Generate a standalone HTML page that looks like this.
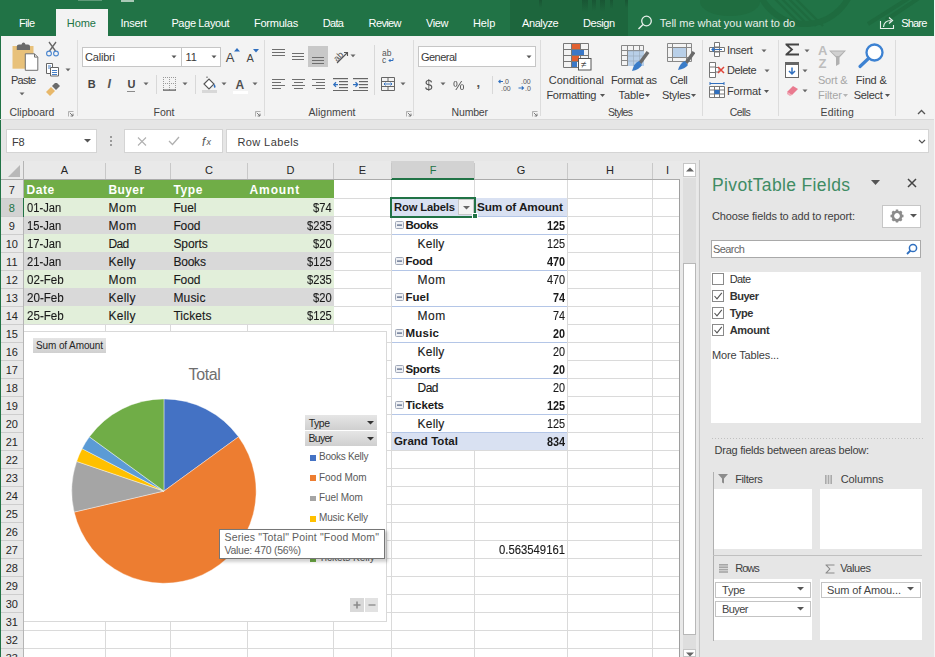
<!DOCTYPE html><html><head><meta charset="utf-8"><style>
html,body{margin:0;padding:0;}
body{width:935px;height:657px;overflow:hidden;position:relative;background:#e6e6e6;font-family:"Liberation Sans",sans-serif;}
div{box-sizing:border-box;}
</style></head><body>
<div style="position:absolute;left:0px;top:0px;width:935px;height:36px;background:#217346;"></div>
<div style="position:absolute;left:510px;top:0px;width:118px;height:36px;background:#1d663d;"></div>
<svg style="position:absolute;left:530px;top:0px;" width="100" height="14" viewBox="0 0 100 14"><defs><linearGradient id="fd" x1="0" y1="0" x2="0" y2="1"><stop offset="0" stop-color="#174f30" stop-opacity="0.7"/><stop offset="1" stop-color="#174f30" stop-opacity="0"/></linearGradient></defs><rect x="9" y="0" width="3" height="8" fill="url(#fd)"/><rect x="52" y="0" width="6" height="12" fill="url(#fd)"/><rect x="62" y="0" width="4" height="11" fill="url(#fd)"/><rect x="70" y="0" width="5" height="12" fill="url(#fd)"/><rect x="80" y="0" width="3" height="9" fill="url(#fd)"/><rect x="95" y="0" width="3" height="8" fill="url(#fd)"/></svg>
<svg style="position:absolute;left:628px;top:0px;" width="306" height="36" viewBox="0 0 306 36"><g fill="none" stroke="#1e6b3f"><ellipse cx="102" cy="2" rx="30" ry="14" fill="#1f6d40" stroke="none"/><path d="M146 -2 L174 26 M153 -2 L181 26 M160 -2 L188 26 M167 -2 L195 26" stroke-width="2.4"/><circle cx="177" cy="-25" r="49" stroke-width="6"/><path d="M281 -2 L240 24 M291 -2 L258 20" stroke-width="4"/></g></svg>
<div style="position:absolute;left:56px;top:9px;width:52px;height:27px;background:#f3f3f3;"></div>
<div style="position:absolute;left:78px;top:0px;width:24px;height:1px;background:#5e9a78;"></div>
<div style="position:absolute;left:121px;top:0px;width:13px;height:2px;background:#a9c9b6;"></div>
<div style="position:absolute;left:19.00px;top:17.69px;font-size:11px;line-height:11px;color:#ffffff;white-space:pre;letter-spacing:-0.570px;">File</div>
<div style="position:absolute;left:66.80px;top:17.69px;font-size:11px;line-height:11px;color:#217346;white-space:pre;letter-spacing:-0.057px;">Home</div>
<div style="position:absolute;left:120.50px;top:17.69px;font-size:11px;line-height:11px;color:#ffffff;white-space:pre;letter-spacing:-0.260px;">Insert</div>
<div style="position:absolute;left:171.40px;top:17.69px;font-size:11px;line-height:11px;color:#ffffff;white-space:pre;letter-spacing:-0.356px;">Page Layout</div>
<div style="position:absolute;left:254.00px;top:17.69px;font-size:11px;line-height:11px;color:#ffffff;white-space:pre;letter-spacing:-0.239px;">Formulas</div>
<div style="position:absolute;left:322.70px;top:17.69px;font-size:11px;line-height:11px;color:#ffffff;white-space:pre;letter-spacing:-0.655px;">Data</div>
<div style="position:absolute;left:368.60px;top:17.69px;font-size:11px;line-height:11px;color:#ffffff;white-space:pre;letter-spacing:-0.636px;">Review</div>
<div style="position:absolute;left:426.00px;top:17.69px;font-size:11px;line-height:11px;color:#ffffff;white-space:pre;letter-spacing:-0.417px;">View</div>
<div style="position:absolute;left:473.00px;top:17.69px;font-size:11px;line-height:11px;color:#ffffff;white-space:pre;letter-spacing:-0.102px;">Help</div>
<div style="position:absolute;left:522.00px;top:17.69px;font-size:11px;line-height:11px;color:#ffffff;white-space:pre;letter-spacing:-0.410px;">Analyze</div>
<div style="position:absolute;left:583.00px;top:17.69px;font-size:11px;line-height:11px;color:#ffffff;white-space:pre;letter-spacing:-0.413px;">Design</div>
<svg style="position:absolute;left:637px;top:15px;" width="16" height="15" viewBox="0 0 16 15"><circle cx="9.5" cy="6" r="4.8" fill="none" stroke="#e8f0eb" stroke-width="1.3"/><path d="M6 9.5 L1.5 14" stroke="#e8f0eb" stroke-width="1.5"/></svg>
<div style="position:absolute;left:659.80px;top:17.69px;font-size:11px;line-height:11px;color:#e6efe9;white-space:pre;letter-spacing:-0.013px;">Tell me what you want to do</div>
<svg style="position:absolute;left:879px;top:16px;" width="17" height="14" viewBox="0 0 17 14"><path d="M1.5 5 V12.5 H14.5 V9" fill="none" stroke="#e8f0eb" stroke-width="1.1"/><path d="M4.5 11 C5 6 8 4.5 12 4.5 M10 1.5 L13.5 4.5 L10 7.5" fill="none" stroke="#e8f0eb" stroke-width="1.2"/></svg>
<div style="position:absolute;left:901.30px;top:17.69px;font-size:11px;line-height:11px;color:#ffffff;white-space:pre;letter-spacing:-0.843px;">Share</div>
<div style="position:absolute;left:934px;top:0px;width:1px;height:657px;background:#f3f3f3;"></div>
<div style="position:absolute;left:0px;top:36px;width:934px;height:84px;background:#f3f3f3;"></div>
<div style="position:absolute;left:0px;top:36px;width:1px;height:621px;background:#217346;"></div>
<div style="position:absolute;left:0px;top:119px;width:934px;height:1px;background:#d9d9d9;"></div>
<div style="position:absolute;left:77px;top:40px;width:1px;height:76px;background:#dcdcdc;"></div>
<div style="position:absolute;left:264px;top:40px;width:1px;height:76px;background:#dcdcdc;"></div>
<div style="position:absolute;left:413px;top:40px;width:1px;height:76px;background:#dcdcdc;"></div>
<div style="position:absolute;left:540px;top:40px;width:1px;height:76px;background:#dcdcdc;"></div>
<div style="position:absolute;left:702px;top:40px;width:1px;height:76px;background:#dcdcdc;"></div>
<div style="position:absolute;left:778px;top:40px;width:1px;height:76px;background:#dcdcdc;"></div>
<div style="position:absolute;left:895px;top:40px;width:1px;height:76px;background:#dcdcdc;"></div>
<div style="position:absolute;left:9.40px;top:107.41px;font-size:10.5px;line-height:10.5px;color:#444444;white-space:pre;letter-spacing:0.008px;">Clipboard</div>
<div style="position:absolute;left:153.50px;top:107.41px;font-size:10.5px;line-height:10.5px;color:#444444;white-space:pre;">Font</div>
<div style="position:absolute;left:308.50px;top:107.41px;font-size:10.5px;line-height:10.5px;color:#444444;white-space:pre;letter-spacing:0.041px;">Alignment</div>
<div style="position:absolute;left:451.60px;top:107.41px;font-size:10.5px;line-height:10.5px;color:#444444;white-space:pre;letter-spacing:-0.186px;">Number</div>
<div style="position:absolute;left:608.00px;top:107.41px;font-size:10.5px;line-height:10.5px;color:#444444;white-space:pre;letter-spacing:-0.723px;">Styles</div>
<div style="position:absolute;left:729.70px;top:107.41px;font-size:10.5px;line-height:10.5px;color:#444444;white-space:pre;letter-spacing:-0.591px;">Cells</div>
<div style="position:absolute;left:820.60px;top:107.41px;font-size:10.5px;line-height:10.5px;color:#444444;white-space:pre;letter-spacing:0.178px;">Editing</div>
<svg style="position:absolute;left:68px;top:111px;" width="6" height="6" viewBox="0 0 6 6"><path d="M0.5 5.5 V0.5 H5.5" fill="none" stroke="#a0a0a0" stroke-width="0.8"/><path d="M1.8 1.8 L5 5 M5 2.6 V5 H2.6" fill="none" stroke="#707070" stroke-width="0.9"/></svg>
<svg style="position:absolute;left:255px;top:111px;" width="6" height="6" viewBox="0 0 6 6"><path d="M0.5 5.5 V0.5 H5.5" fill="none" stroke="#a0a0a0" stroke-width="0.8"/><path d="M1.8 1.8 L5 5 M5 2.6 V5 H2.6" fill="none" stroke="#707070" stroke-width="0.9"/></svg>
<svg style="position:absolute;left:406px;top:111px;" width="6" height="6" viewBox="0 0 6 6"><path d="M0.5 5.5 V0.5 H5.5" fill="none" stroke="#a0a0a0" stroke-width="0.8"/><path d="M1.8 1.8 L5 5 M5 2.6 V5 H2.6" fill="none" stroke="#707070" stroke-width="0.9"/></svg>
<svg style="position:absolute;left:532px;top:111px;" width="6" height="6" viewBox="0 0 6 6"><path d="M0.5 5.5 V0.5 H5.5" fill="none" stroke="#a0a0a0" stroke-width="0.8"/><path d="M1.8 1.8 L5 5 M5 2.6 V5 H2.6" fill="none" stroke="#707070" stroke-width="0.9"/></svg>
<svg style="position:absolute;left:11px;top:42px;" width="29" height="30" viewBox="0 0 29 30"><rect x="1.5" y="4" width="21" height="22.7" fill="#e8c17a"/><path d="M5.8 4.5 Q5.8 2.5 8 2.5 H10.5 Q11 0.5 12.5 0.5 Q14 0.5 14.5 2.5 H17 Q19 2.5 19 4.5 V8 H5.8 Z" fill="#6a6a6a"/><path d="M14.3 11.8 H23.5 L26.8 15.1 V28.3 H14.3 Z" fill="#fff" stroke="#707070" stroke-width="1"/><path d="M23.5 11.8 V15.1 H26.8" fill="none" stroke="#707070" stroke-width="1"/></svg>
<div style="position:absolute;left:11.00px;top:74.69px;font-size:11px;line-height:11px;color:#3a3a3a;white-space:pre;letter-spacing:-0.776px;">Paste</div>
<svg style="position:absolute;left:19px;top:92px;" width="6" height="4" viewBox="0 0 6 4"><path d="M0.5 0.5 H5.5 L3 3.2 Z" fill="#666"/></svg>
<svg style="position:absolute;left:45px;top:41px;" width="15" height="16" viewBox="0 0 15 16"><path d="M4 1 L10.5 10 M11 1 L4.5 10" stroke="#666" stroke-width="1.3"/><circle cx="4" cy="12.5" r="2.4" fill="none" stroke="#4a86d0" stroke-width="1.1"/><circle cx="11" cy="12.5" r="2.4" fill="none" stroke="#4a86d0" stroke-width="1.1"/></svg>
<svg style="position:absolute;left:45px;top:62px;" width="15" height="15" viewBox="0 0 15 15"><path d="M1.5 1.5 H7.5 V11.5 H1.5 Z" fill="#fff" stroke="#666" stroke-width="1"/><path d="M5.5 5.5 H13.5 V14 H5.5 Z" fill="#fff" stroke="#666" stroke-width="1"/><path d="M3 4 H6 M3 6 H5 M7 8.5 H12 M7 10.5 H12 M7 12.5 H12" stroke="#2f6fbf" stroke-width="0.9"/></svg>
<svg style="position:absolute;left:65px;top:68px;" width="6" height="4" viewBox="0 0 6 4"><path d="M0.5 0.5 H5.5 L3 3.2 Z" fill="#666"/></svg>
<svg style="position:absolute;left:45px;top:83px;" width="16" height="14" viewBox="0 0 16 14"><path d="M1 9 L6 4 L10 8 L5 13 Z" fill="#e8b86a"/><path d="M7 3 L11 7 L15 3 L11 -1 Z" fill="#6a6a6a"/></svg>
<div style="position:absolute;left:82px;top:47px;width:100px;height:20px;background:#fff;border:1px solid #c6c6c6;"></div>
<div style="position:absolute;left:181px;top:47px;width:40px;height:20px;background:#fff;border:1px solid #c6c6c6;"></div>
<div style="position:absolute;left:85.00px;top:51.69px;font-size:11px;line-height:11px;color:#3a3a3a;white-space:pre;letter-spacing:-0.197px;">Calibri</div>
<div style="position:absolute;left:185.50px;top:51.69px;font-size:11px;line-height:11px;color:#3a3a3a;white-space:pre;">11</div>
<svg style="position:absolute;left:171px;top:55px;" width="6" height="4" viewBox="0 0 6 4"><path d="M0.5 0.5 H5.5 L3 3.2 Z" fill="#555"/></svg>
<svg style="position:absolute;left:211px;top:55px;" width="6" height="4" viewBox="0 0 6 4"><path d="M0.5 0.5 H5.5 L3 3.2 Z" fill="#555"/></svg>
<div style="position:absolute;left:225.80px;top:51.00px;font-size:13px;line-height:13px;color:#444;white-space:pre;">A</div>
<svg style="position:absolute;left:234px;top:48px;" width="6" height="4" viewBox="0 0 6 4"><path d="M0 3.5 L3 0 L6 3.5 Z" fill="#2f6fbf"/></svg>
<div style="position:absolute;left:246.50px;top:52.69px;font-size:11px;line-height:11px;color:#444;white-space:pre;">A</div>
<svg style="position:absolute;left:253px;top:49px;" width="6" height="4" viewBox="0 0 6 4"><path d="M0 0 H6 L3 3.5 Z" fill="#2f6fbf"/></svg>
<div style="position:absolute;left:87.80px;top:79.19px;font-size:11px;line-height:11px;color:#444;white-space:pre;font-weight:bold;">B</div>
<div style="position:absolute;left:107.50px;top:77.92px;font-size:12.5px;line-height:12.5px;color:#555;white-space:pre;font-weight:bold;font-style:italic;font-family:"Liberation Serif",serif;">I</div>
<div style="position:absolute;left:127.40px;top:78.69px;font-size:11px;line-height:11px;color:#444;white-space:pre;font-weight:bold;">U</div>
<div style="position:absolute;left:127px;top:90.5px;width:8px;height:1.0px;background:#8a8a8a;"></div>
<svg style="position:absolute;left:143px;top:82px;" width="6" height="4" viewBox="0 0 6 4"><path d="M0.5 0.5 H5.5 L3 3.2 Z" fill="#666"/></svg>
<div style="position:absolute;left:156px;top:75px;width:1px;height:19px;background:#d8d8d8;"></div>
<svg style="position:absolute;left:163px;top:77px;" width="13" height="14" viewBox="0 0 13 14"><rect x="0" y="0" width="1" height="1" fill="#9a9a9a"/><rect x="0" y="6" width="1" height="1" fill="#9a9a9a"/><rect x="0" y="0" width="1" height="1" fill="#9a9a9a"/><rect x="6" y="0" width="1" height="1" fill="#9a9a9a"/><rect x="12" y="0" width="1" height="1" fill="#9a9a9a"/><rect x="2" y="0" width="1" height="1" fill="#9a9a9a"/><rect x="2" y="6" width="1" height="1" fill="#9a9a9a"/><rect x="0" y="2" width="1" height="1" fill="#9a9a9a"/><rect x="6" y="2" width="1" height="1" fill="#9a9a9a"/><rect x="12" y="2" width="1" height="1" fill="#9a9a9a"/><rect x="4" y="0" width="1" height="1" fill="#9a9a9a"/><rect x="4" y="6" width="1" height="1" fill="#9a9a9a"/><rect x="0" y="4" width="1" height="1" fill="#9a9a9a"/><rect x="6" y="4" width="1" height="1" fill="#9a9a9a"/><rect x="12" y="4" width="1" height="1" fill="#9a9a9a"/><rect x="6" y="0" width="1" height="1" fill="#9a9a9a"/><rect x="6" y="6" width="1" height="1" fill="#9a9a9a"/><rect x="0" y="6" width="1" height="1" fill="#9a9a9a"/><rect x="6" y="6" width="1" height="1" fill="#9a9a9a"/><rect x="12" y="6" width="1" height="1" fill="#9a9a9a"/><rect x="8" y="0" width="1" height="1" fill="#9a9a9a"/><rect x="8" y="6" width="1" height="1" fill="#9a9a9a"/><rect x="0" y="8" width="1" height="1" fill="#9a9a9a"/><rect x="6" y="8" width="1" height="1" fill="#9a9a9a"/><rect x="12" y="8" width="1" height="1" fill="#9a9a9a"/><rect x="10" y="0" width="1" height="1" fill="#9a9a9a"/><rect x="10" y="6" width="1" height="1" fill="#9a9a9a"/><rect x="0" y="10" width="1" height="1" fill="#9a9a9a"/><rect x="6" y="10" width="1" height="1" fill="#9a9a9a"/><rect x="12" y="10" width="1" height="1" fill="#9a9a9a"/><rect x="12" y="0" width="1" height="1" fill="#9a9a9a"/><rect x="12" y="6" width="1" height="1" fill="#9a9a9a"/><rect x="0" y="12" width="1" height="1" fill="#9a9a9a"/><rect x="6" y="12" width="1" height="1" fill="#9a9a9a"/><rect x="12" y="12" width="1" height="1" fill="#9a9a9a"/><rect x="0" y="12.5" width="13" height="1.2" fill="#555"/></svg>
<svg style="position:absolute;left:182px;top:82px;" width="6" height="4" viewBox="0 0 6 4"><path d="M0.5 0.5 H5.5 L3 3.2 Z" fill="#666"/></svg>
<div style="position:absolute;left:195px;top:75px;width:1px;height:19px;background:#d8d8d8;"></div>
<svg style="position:absolute;left:201px;top:76px;" width="17" height="17" viewBox="0 0 17 17"><path d="M3 8 L8 3 L13 8 L8 13 Z" fill="#fff" stroke="#555" stroke-width="1.1"/><path d="M6 2 V0.5" stroke="#555"/><path d="M13 8 Q15.5 10 14 12 Q12 11 13 8Z" fill="#2f6fbf"/><rect x="1" y="14" width="15" height="3" fill="#d8d8d8"/></svg>
<svg style="position:absolute;left:221px;top:82px;" width="6" height="4" viewBox="0 0 6 4"><path d="M0.5 0.5 H5.5 L3 3.2 Z" fill="#666"/></svg>
<div style="position:absolute;left:235.40px;top:78.84px;font-size:12px;line-height:12px;color:#505050;white-space:pre;font-weight:bold;">A</div>
<div style="position:absolute;left:233px;top:91px;width:15px;height:3px;background:#fff;"></div>
<svg style="position:absolute;left:252px;top:82px;" width="6" height="4" viewBox="0 0 6 4"><path d="M0.5 0.5 H5.5 L3 3.2 Z" fill="#666"/></svg>
<svg style="position:absolute;left:272px;top:48.5px;" width="14" height="10" viewBox="0 0 14 10"><rect x="0" y="0" width="13" height="1" fill="#6e6e6e"/><rect x="0" y="3" width="13" height="1" fill="#6e6e6e"/><rect x="0" y="6" width="13" height="1" fill="#6e6e6e"/></svg>
<svg style="position:absolute;left:292px;top:52.5px;" width="14" height="10" viewBox="0 0 14 10"><rect x="0" y="0" width="12" height="1" fill="#6e6e6e"/><rect x="0" y="3" width="12" height="1" fill="#6e6e6e"/><rect x="0" y="6" width="12" height="1" fill="#6e6e6e"/></svg>
<div style="position:absolute;left:308px;top:46px;width:20px;height:21px;background:#c8c8c8;"></div>
<svg style="position:absolute;left:312px;top:57px;" width="14" height="10" viewBox="0 0 14 10"><rect x="0" y="0" width="12" height="1" fill="#6e6e6e"/><rect x="0" y="3" width="12" height="1" fill="#6e6e6e"/><rect x="0" y="6" width="12" height="1" fill="#6e6e6e"/></svg>
<svg style="position:absolute;left:333px;top:48px;" width="16" height="16" viewBox="0 0 16 16"><text x="0" y="11" font-size="9" fill="#555" transform="rotate(-45 6 8)" font-family="Liberation Sans">ab</text><path d="M4 15 L14 5 M11 4.5 H14.5 V8" fill="none" stroke="#555" stroke-width="1.1"/></svg>
<svg style="position:absolute;left:350px;top:54px;" width="6" height="4" viewBox="0 0 6 4"><path d="M0.5 0.5 H5.5 L3 3.2 Z" fill="#666"/></svg>
<div style="position:absolute;left:374px;top:45px;width:1px;height:50px;background:#d8d8d8;"></div>
<svg style="position:absolute;left:382px;top:49px;" width="14" height="15" viewBox="0 0 14 15"><text x="0" y="7" font-size="8.5" fill="#555" font-family="Liberation Sans">ab</text><text x="0" y="14" font-size="8.5" fill="#555" font-family="Liberation Sans">c</text><path d="M11 9 V11.5 H7 M8.5 10 L7 11.5 L8.5 13" fill="none" stroke="#2f6fbf" stroke-width="1"/></svg>
<svg style="position:absolute;left:272px;top:79px;" width="14" height="13" viewBox="0 0 14 13"><rect x="0" y="0" width="13" height="1" fill="#6e6e6e"/><rect x="0" y="3" width="9" height="1" fill="#6e6e6e"/><rect x="0" y="6" width="13" height="1" fill="#6e6e6e"/><rect x="0" y="9" width="9" height="1" fill="#6e6e6e"/></svg>
<svg style="position:absolute;left:292px;top:79px;" width="14" height="13" viewBox="0 0 14 13"><rect x="0" y="0" width="13" height="1" fill="#6e6e6e"/><rect x="2" y="3" width="9" height="1" fill="#6e6e6e"/><rect x="0" y="6" width="13" height="1" fill="#6e6e6e"/><rect x="2" y="9" width="9" height="1" fill="#6e6e6e"/></svg>
<svg style="position:absolute;left:312px;top:79px;" width="14" height="13" viewBox="0 0 14 13"><rect x="0" y="0" width="13" height="1" fill="#6e6e6e"/><rect x="4" y="3" width="9" height="1" fill="#6e6e6e"/><rect x="0" y="6" width="13" height="1" fill="#6e6e6e"/><rect x="4" y="9" width="9" height="1" fill="#6e6e6e"/></svg>
<svg style="position:absolute;left:333px;top:78px;" width="15" height="13" viewBox="0 0 15 13"><rect x="0" y="0" width="15" height="1.2" fill="#666"/><rect x="6" y="3" width="9" height="1.2" fill="#666"/><rect x="6" y="6" width="9" height="1.2" fill="#666"/><rect x="6" y="9" width="9" height="1.2" fill="#666"/><rect x="0" y="12" width="15" height="1.2" fill="#666"/><path d="M5 6.6 H0.8 M3 4.3 L0.8 6.6 L3 8.9" fill="none" stroke="#2f6fbf" stroke-width="1.3"/></svg>
<svg style="position:absolute;left:353px;top:78px;" width="15" height="13" viewBox="0 0 15 13"><rect x="0" y="0" width="15" height="1.2" fill="#666"/><rect x="6" y="3" width="9" height="1.2" fill="#666"/><rect x="6" y="6" width="9" height="1.2" fill="#666"/><rect x="6" y="9" width="9" height="1.2" fill="#666"/><rect x="0" y="12" width="15" height="1.2" fill="#666"/><path d="M0 6.6 H4.5 M2.5 4.3 L4.7 6.6 L2.5 8.9" fill="none" stroke="#2f6fbf" stroke-width="1.3"/></svg>
<svg style="position:absolute;left:381px;top:77px;" width="14" height="14" viewBox="0 0 14 14"><path d="M0.5 0.5 H13.5 V13.5 H0.5 Z M0.5 4.5 H13.5 M0.5 9.5 H13.5 M7 0.5 V4.5 M7 9.5 V13.5" fill="none" stroke="#666" stroke-width="1"/><path d="M3 7 H11 M4.5 5.5 L3 7 L4.5 8.5 M9.5 5.5 L11 7 L9.5 8.5" fill="none" stroke="#2f6fbf" stroke-width="0.9"/></svg>
<svg style="position:absolute;left:400px;top:82px;" width="6" height="4" viewBox="0 0 6 4"><path d="M0.5 0.5 H5.5 L3 3.2 Z" fill="#666"/></svg>
<div style="position:absolute;left:418px;top:46px;width:118px;height:21px;background:#fff;border:1px solid #c6c6c6;"></div>
<div style="position:absolute;left:421.00px;top:51.69px;font-size:11px;line-height:11px;color:#3a3a3a;white-space:pre;letter-spacing:-0.527px;">General</div>
<svg style="position:absolute;left:526px;top:55px;" width="6" height="4" viewBox="0 0 6 4"><path d="M0.5 0.5 H5.5 L3 3.2 Z" fill="#555"/></svg>
<div style="position:absolute;left:424.60px;top:77.95px;font-size:14px;line-height:14px;color:#555;white-space:pre;transform:scaleX(0.9653);transform-origin:0 0;">$</div>
<svg style="position:absolute;left:440px;top:82px;" width="6" height="4" viewBox="0 0 6 4"><path d="M0.5 0.5 H5.5 L3 3.2 Z" fill="#666"/></svg>
<div style="position:absolute;left:453.00px;top:79.00px;font-size:13px;line-height:13px;color:#555;white-space:pre;transform:scaleX(0.9939);transform-origin:0 0;">%</div>
<div style="position:absolute;left:476.50px;top:75.50px;font-size:13px;line-height:13px;color:#555;white-space:pre;font-weight:bold;">,</div>
<div style="position:absolute;left:492px;top:76px;width:1px;height:18px;background:#d8d8d8;"></div>
<svg style="position:absolute;left:498px;top:78px;" width="15" height="13" viewBox="0 0 15 13"><text x="5" y="6" font-size="7" fill="#555" font-family="Liberation Sans">.0</text><text x="3" y="12.5" font-size="7" fill="#555" font-family="Liberation Sans">.00</text><path d="M5 3.5 H0.8 M2.5 1.8 L0.8 3.5 L2.5 5.2" fill="none" stroke="#2f6fbf" stroke-width="1.1"/></svg>
<svg style="position:absolute;left:518px;top:78px;" width="15" height="13" viewBox="0 0 15 13"><text x="3" y="6" font-size="7" fill="#555" font-family="Liberation Sans">.00</text><text x="7" y="12.5" font-size="7" fill="#555" font-family="Liberation Sans">.0</text><path d="M0.5 10 H5.5 M3.8 8.3 L5.5 10 L3.8 11.7" fill="none" stroke="#2f6fbf" stroke-width="1.1"/></svg>
<svg style="position:absolute;left:563px;top:43px;" width="29" height="28" viewBox="0 0 29 28"><g fill="none" stroke="#777" stroke-width="1"><path d="M0.5 0.5 H25.5 V24.5 H0.5 Z M0.5 6.5 H25.5 M0.5 12.5 H25.5 M0.5 18.5 H25.5 M8.5 0.5 V24.5 M17.5 0.5 V24.5"/></g><rect x="9" y="1" width="8" height="5" fill="#e06030"/><rect x="9" y="7" width="12" height="5" fill="#3a78c8"/><rect x="9" y="13" width="7" height="5" fill="#e06030"/><rect x="9" y="19" width="5" height="5" fill="#3a78c8"/><rect x="15.5" y="15.5" width="12.5" height="11.5" fill="#fff" stroke="#555" stroke-width="1"/><text x="18" y="25" font-size="10" fill="#444" font-family="Liberation Sans">&#8800;</text></svg>
<div style="position:absolute;left:548.70px;top:75.19px;font-size:11px;line-height:11px;color:#3a3a3a;white-space:pre;letter-spacing:0.024px;">Conditional</div>
<div style="position:absolute;left:546.40px;top:89.69px;font-size:11px;line-height:11px;color:#3a3a3a;white-space:pre;letter-spacing:-0.287px;">Formatting</div>
<svg style="position:absolute;left:600px;top:94px;" width="5" height="3" viewBox="0 0 5 3"><path d="M0 0 H5 L2.5 3 Z" fill="#555"/></svg>
<svg style="position:absolute;left:621px;top:45px;" width="29" height="27" viewBox="0 0 29 27"><g fill="none" stroke="#888" stroke-width="1"><path d="M0.5 0.5 H22.5 V20.5 H0.5 Z M0.5 5.5 H22.5 M0.5 10.5 H22.5 M0.5 15.5 H22.5 M6.5 0.5 V20.5 M12.5 0.5 V20.5 M18.5 0.5 V20.5"/></g><rect x="7" y="6" width="16" height="15" fill="#b8cfe8"/><path d="M7 6 H23 M7 11 H23 M7 16 H23 M12.5 6 V21 M18.5 6 V21" stroke="#9ab" stroke-width="0.6"/><path d="M27 7 L19 18" stroke="#6a6a6a" stroke-width="3.5"/><path d="M18 16 Q13 18 11 26 Q18 25 21 20 Z" fill="#3a7cc8"/></svg>
<div style="position:absolute;left:611.00px;top:75.19px;font-size:11px;line-height:11px;color:#3a3a3a;white-space:pre;letter-spacing:-0.438px;">Format as</div>
<div style="position:absolute;left:618.50px;top:89.69px;font-size:11px;line-height:11px;color:#3a3a3a;white-space:pre;letter-spacing:-0.072px;">Table</div>
<svg style="position:absolute;left:645px;top:94px;" width="5" height="3" viewBox="0 0 5 3"><path d="M0 0 H5 L2.5 3 Z" fill="#555"/></svg>
<svg style="position:absolute;left:667px;top:43px;" width="28" height="28" viewBox="0 0 28 28"><g fill="none" stroke="#888" stroke-width="1"><path d="M0.5 0.5 H24.5 V18.5 H0.5 Z M0.5 4.5 H24.5 M0.5 14.5 H24.5 M5.5 0.5 V18.5 M19.5 0.5 V18.5"/></g><rect x="6" y="5" width="13" height="9" fill="#b8cfe8"/><path d="M27 9 L19 20" stroke="#6a6a6a" stroke-width="3.5"/><path d="M18 18 Q13 20 11 27 Q18 26 21 22 Z" fill="#3a7cc8"/></svg>
<div style="position:absolute;left:670.00px;top:75.19px;font-size:11px;line-height:11px;color:#3a3a3a;white-space:pre;letter-spacing:-0.458px;">Cell</div>
<div style="position:absolute;left:662.00px;top:89.69px;font-size:11px;line-height:11px;color:#3a3a3a;white-space:pre;letter-spacing:-0.295px;">Styles</div>
<svg style="position:absolute;left:691px;top:94px;" width="5" height="3" viewBox="0 0 5 3"><path d="M0 0 H5 L2.5 3 Z" fill="#555"/></svg>
<svg style="position:absolute;left:709px;top:42px;" width="16" height="15" viewBox="0 0 16 15"><path d="M5.5 0.5 H10.5 V14.5 H5.5 Z M5.5 5 H10.5 M5.5 10 H10.5 M0.5 5.5 V9.5 H15.5 V5.5 Z" fill="#fff" stroke="#777" stroke-width="1"/><path d="M13 7.5 H3 M5 5.5 L3 7.5 L5 9.5" fill="none" stroke="#2f6fbf" stroke-width="1.2"/></svg>
<div style="position:absolute;left:727.00px;top:44.69px;font-size:11px;line-height:11px;color:#3a3a3a;white-space:pre;letter-spacing:-0.340px;">Insert</div>
<svg style="position:absolute;left:761px;top:49px;" width="6" height="4" viewBox="0 0 6 4"><path d="M0.5 0.5 H5.5 L3 3.2 Z" fill="#666"/></svg>
<svg style="position:absolute;left:709px;top:62px;" width="16" height="16" viewBox="0 0 16 16"><path d="M0.5 0.5 H6.5 V15.5 H0.5 Z M0.5 5 H6.5 M0.5 10.5 H6.5 M6.5 5.5 H10 V10 H6.5" fill="#fff" stroke="#777" stroke-width="1"/><path d="M9 5 L15 11 M15 5 L9 11" stroke="#e0453a" stroke-width="1.5"/></svg>
<div style="position:absolute;left:727.00px;top:65.19px;font-size:11px;line-height:11px;color:#3a3a3a;white-space:pre;letter-spacing:-0.458px;">Delete</div>
<svg style="position:absolute;left:764px;top:69px;" width="6" height="4" viewBox="0 0 6 4"><path d="M0.5 0.5 H5.5 L3 3.2 Z" fill="#666"/></svg>
<svg style="position:absolute;left:709px;top:82px;" width="16" height="16" viewBox="0 0 16 16"><path d="M1 1.5 H15" stroke="#2f6fbf" stroke-width="1"/><path d="M1 0 V3 M15 0 V3" stroke="#2f6fbf" stroke-width="1"/><path d="M0.5 4.5 H15.5 V15.5 H0.5 Z M0.5 8 H15.5 M0.5 12 H15.5 M5.5 4.5 V15.5 M10.5 4.5 V15.5" fill="#fff" stroke="#777" stroke-width="1"/><rect x="5.5" y="8" width="5" height="4" fill="#2f6fbf"/></svg>
<div style="position:absolute;left:727.00px;top:85.69px;font-size:11px;line-height:11px;color:#3a3a3a;white-space:pre;letter-spacing:-0.163px;">Format</div>
<svg style="position:absolute;left:764px;top:90px;" width="5" height="3" viewBox="0 0 5 3"><path d="M0 0 H5 L2.5 3 Z" fill="#555"/></svg>
<svg style="position:absolute;left:785px;top:43px;" width="15" height="13" viewBox="0 0 15 13"><path d="M0.5 0.5 H14 V2.6 H3.8 L8.3 6.5 L3.8 10.4 H14 V12.5 H0.5 V11 L5.6 6.5 L0.5 2 Z" fill="#444"/></svg>
<svg style="position:absolute;left:804px;top:49px;" width="6" height="4" viewBox="0 0 6 4"><path d="M0.5 0.5 H5.5 L3 3.2 Z" fill="#666"/></svg>
<svg style="position:absolute;left:785px;top:62px;" width="14" height="16" viewBox="0 0 14 16"><rect x="0.5" y="0.5" width="13" height="15" fill="#fff" stroke="#666" stroke-width="1"/><rect x="0.5" y="0.5" width="13" height="2.5" fill="#666"/><path d="M7 5.5 V12 M4 9 L7 12 L10 9" fill="none" stroke="#2f6fbf" stroke-width="1.5"/></svg>
<svg style="position:absolute;left:802px;top:69px;" width="6" height="4" viewBox="0 0 6 4"><path d="M0.5 0.5 H5.5 L3 3.2 Z" fill="#666"/></svg>
<svg style="position:absolute;left:786px;top:85px;" width="13" height="11" viewBox="0 0 13 11"><path d="M1 7 L7 1 L12 4 L6 10 Z" fill="#e97a8f"/><path d="M1 7 L6 10 L4 11 L1 9 Z" fill="#f0a8b5"/></svg>
<svg style="position:absolute;left:802px;top:89px;" width="6" height="4" viewBox="0 0 6 4"><path d="M0.5 0.5 H5.5 L3 3.2 Z" fill="#666"/></svg>
<svg style="position:absolute;left:817px;top:43px;" width="30" height="26" viewBox="0 0 30 26"><text x="1" y="12" font-size="13" font-weight="bold" fill="#bdbdbd" font-family="Liberation Sans">A</text><text x="1.5" y="24.5" font-size="13" font-weight="bold" fill="#bdbdbd" font-family="Liberation Sans">Z</text><path d="M12 7.5 H29 L22.5 14.5 V21 L19 23 V14.5 Z" fill="#b0b0b0"/><path d="M14 8.5 H27 L22 13 H19 Z" fill="#d0d0d0"/></svg>
<div style="position:absolute;left:818.00px;top:75.19px;font-size:11px;line-height:11px;color:#a6a6a6;white-space:pre;letter-spacing:-0.216px;">Sort &amp;</div>
<div style="position:absolute;left:818.00px;top:89.69px;font-size:11px;line-height:11px;color:#a6a6a6;white-space:pre;letter-spacing:-0.084px;">Filter</div>
<svg style="position:absolute;left:843px;top:94px;" width="5" height="3" viewBox="0 0 5 3"><path d="M0 0 H5 L2.5 3 Z" fill="#b5b5b5"/></svg>
<svg style="position:absolute;left:857px;top:43px;" width="28" height="26" viewBox="0 0 28 26"><circle cx="17.5" cy="9.5" r="8" fill="#fff" stroke="#3d82d2" stroke-width="2.3"/><path d="M11.5 15.5 L3 23.5" stroke="#3d82d2" stroke-width="3.2" stroke-linecap="round"/></svg>
<div style="position:absolute;left:855.80px;top:75.19px;font-size:11px;line-height:11px;color:#3a3a3a;white-space:pre;letter-spacing:-0.158px;">Find &amp;</div>
<div style="position:absolute;left:853.80px;top:89.69px;font-size:11px;line-height:11px;color:#3a3a3a;white-space:pre;letter-spacing:-0.316px;">Select</div>
<svg style="position:absolute;left:885px;top:94px;" width="5" height="3" viewBox="0 0 5 3"><path d="M0 0 H5 L2.5 3 Z" fill="#555"/></svg>
<svg style="position:absolute;left:917px;top:109px;" width="9" height="6" viewBox="0 0 9 6"><path d="M1 5 L4.5 1.5 L8 5" fill="none" stroke="#555" stroke-width="1.3"/></svg>
<div style="position:absolute;left:6px;top:129px;width:91px;height:24px;background:#fff;border:1px solid #d4d4d4;"></div>
<div style="position:absolute;left:12.00px;top:136.69px;font-size:11px;line-height:11px;color:#3a3a3a;white-space:pre;letter-spacing:-0.315px;">F8</div>
<svg style="position:absolute;left:84px;top:139px;" width="7" height="4" viewBox="0 0 7 4"><path d="M0 0 H7 L3.5 3.5 Z" fill="#555"/></svg>
<div style="position:absolute;left:110px;top:136px;width:1.5px;height:1.5px;background:#9a9a9a;"></div>
<div style="position:absolute;left:110px;top:140px;width:1.5px;height:1.5px;background:#9a9a9a;"></div>
<div style="position:absolute;left:110px;top:144px;width:1.5px;height:1.5px;background:#9a9a9a;"></div>
<div style="position:absolute;left:124px;top:129px;width:99px;height:24px;background:#fff;border:1px solid #d4d4d4;"></div>
<svg style="position:absolute;left:137px;top:137px;" width="10" height="9" viewBox="0 0 10 9"><path d="M1 0.5 L9 8.5 M9 0.5 L1 8.5" stroke="#b0b0b0" stroke-width="1.1"/></svg>
<svg style="position:absolute;left:168px;top:136px;" width="12" height="10" viewBox="0 0 12 10"><path d="M1 5 L4.5 8.5 L11 1" fill="none" stroke="#b0b0b0" stroke-width="1.3"/></svg>
<div style="position:absolute;left:202.00px;top:135.84px;font-size:12px;line-height:12px;color:#555;white-space:pre;font-style:italic;font-family:"Liberation Serif",serif;">f</div>
<div style="position:absolute;left:206.41px;top:138.38px;font-size:9px;line-height:9px;color:#555;white-space:pre;font-style:italic;font-family:"Liberation Serif",serif;">x</div>
<div style="position:absolute;left:226px;top:129px;width:703px;height:24px;background:#fff;border:1px solid #d4d4d4;"></div>
<div style="position:absolute;left:237.40px;top:136.69px;font-size:11px;line-height:11px;color:#3a3a3a;white-space:pre;letter-spacing:0.414px;">Row Labels</div>
<svg style="position:absolute;left:918px;top:139px;" width="8" height="5" viewBox="0 0 8 5"><path d="M1 1 L4 4 L7 1" fill="none" stroke="#555" stroke-width="1.2"/></svg>
<div style="position:absolute;left:1px;top:161px;width:679px;height:19px;background:#e9e9e9;"></div>
<div style="position:absolute;left:1px;top:179px;width:679px;height:1px;background:#ababab;"></div>
<svg style="position:absolute;left:7px;top:165px;" width="14" height="13" viewBox="0 0 14 13"><path d="M13 0 V12 H1 Z" fill="#b8b8b8"/></svg>
<div style="position:absolute;left:391px;top:161px;width:83px;height:19px;background:#d2d2d2;"></div>
<div style="position:absolute;left:391px;top:178px;width:83px;height:2px;background:#217346;"></div>
<div style="position:absolute;left:23px;top:163px;width:1px;height:16px;background:#c8c8c8;"></div>
<div style="position:absolute;left:105px;top:163px;width:1px;height:16px;background:#c8c8c8;"></div>
<div style="position:absolute;left:170px;top:163px;width:1px;height:16px;background:#c8c8c8;"></div>
<div style="position:absolute;left:247px;top:163px;width:1px;height:16px;background:#c8c8c8;"></div>
<div style="position:absolute;left:333px;top:163px;width:1px;height:16px;background:#c8c8c8;"></div>
<div style="position:absolute;left:391px;top:163px;width:1px;height:16px;background:#c8c8c8;"></div>
<div style="position:absolute;left:474px;top:163px;width:1px;height:16px;background:#c8c8c8;"></div>
<div style="position:absolute;left:567px;top:163px;width:1px;height:16px;background:#c8c8c8;"></div>
<div style="position:absolute;left:652px;top:163px;width:1px;height:16px;background:#c8c8c8;"></div>
<div style="position:absolute;left:60.81px;top:164.89px;font-size:11px;line-height:11px;color:#262626;white-space:pre;">A</div>
<div style="position:absolute;left:134.34px;top:164.89px;font-size:11px;line-height:11px;color:#262626;white-space:pre;">B</div>
<div style="position:absolute;left:205.04px;top:164.89px;font-size:11px;line-height:11px;color:#262626;white-space:pre;">C</div>
<div style="position:absolute;left:286.54px;top:164.89px;font-size:11px;line-height:11px;color:#262626;white-space:pre;">D</div>
<div style="position:absolute;left:358.84px;top:164.89px;font-size:11px;line-height:11px;color:#262626;white-space:pre;">E</div>
<div style="position:absolute;left:429.64px;top:164.89px;font-size:11px;line-height:11px;color:#217346;white-space:pre;">F</div>
<div style="position:absolute;left:516.71px;top:164.89px;font-size:11px;line-height:11px;color:#262626;white-space:pre;">G</div>
<div style="position:absolute;left:606.04px;top:164.89px;font-size:11px;line-height:11px;color:#262626;white-space:pre;">H</div>
<div style="position:absolute;left:665.96px;top:164.89px;font-size:11px;line-height:11px;color:#262626;white-space:pre;">I</div>
<div style="position:absolute;left:24px;top:180px;width:656px;height:477px;background:#fff;"></div>
<div style="position:absolute;left:1px;top:180px;width:22px;height:477px;background:#e9e9e9;"></div>
<div style="position:absolute;left:1px;top:198px;width:22px;height:18px;background:#d2d2d2;"></div>
<div style="position:absolute;left:1px;top:198px;width:22px;height:1px;background:#cdcdcd;"></div>
<div style="position:absolute;left:8.75px;top:185.49px;font-size:11px;line-height:11px;color:#262626;white-space:pre;">7</div>
<div style="position:absolute;left:24px;top:198px;width:656px;height:1px;background:#dadada;"></div>
<div style="position:absolute;left:1px;top:216px;width:22px;height:1px;background:#cdcdcd;"></div>
<div style="position:absolute;left:8.75px;top:203.49px;font-size:11px;line-height:11px;color:#217346;white-space:pre;">8</div>
<div style="position:absolute;left:24px;top:216px;width:656px;height:1px;background:#dadada;"></div>
<div style="position:absolute;left:1px;top:234px;width:22px;height:1px;background:#cdcdcd;"></div>
<div style="position:absolute;left:8.75px;top:221.49px;font-size:11px;line-height:11px;color:#262626;white-space:pre;">9</div>
<div style="position:absolute;left:24px;top:234px;width:656px;height:1px;background:#dadada;"></div>
<div style="position:absolute;left:1px;top:252px;width:22px;height:1px;background:#cdcdcd;"></div>
<div style="position:absolute;left:5.70px;top:239.49px;font-size:11px;line-height:11px;color:#262626;white-space:pre;">10</div>
<div style="position:absolute;left:24px;top:252px;width:656px;height:1px;background:#dadada;"></div>
<div style="position:absolute;left:1px;top:270px;width:22px;height:1px;background:#cdcdcd;"></div>
<div style="position:absolute;left:6.08px;top:257.49px;font-size:11px;line-height:11px;color:#262626;white-space:pre;">11</div>
<div style="position:absolute;left:24px;top:270px;width:656px;height:1px;background:#dadada;"></div>
<div style="position:absolute;left:1px;top:288px;width:22px;height:1px;background:#cdcdcd;"></div>
<div style="position:absolute;left:5.70px;top:275.49px;font-size:11px;line-height:11px;color:#262626;white-space:pre;">12</div>
<div style="position:absolute;left:24px;top:288px;width:656px;height:1px;background:#dadada;"></div>
<div style="position:absolute;left:1px;top:306px;width:22px;height:1px;background:#cdcdcd;"></div>
<div style="position:absolute;left:5.70px;top:293.49px;font-size:11px;line-height:11px;color:#262626;white-space:pre;">13</div>
<div style="position:absolute;left:24px;top:306px;width:656px;height:1px;background:#dadada;"></div>
<div style="position:absolute;left:1px;top:324px;width:22px;height:1px;background:#cdcdcd;"></div>
<div style="position:absolute;left:5.70px;top:311.49px;font-size:11px;line-height:11px;color:#262626;white-space:pre;">14</div>
<div style="position:absolute;left:24px;top:324px;width:656px;height:1px;background:#dadada;"></div>
<div style="position:absolute;left:1px;top:342px;width:22px;height:1px;background:#cdcdcd;"></div>
<div style="position:absolute;left:5.70px;top:329.49px;font-size:11px;line-height:11px;color:#262626;white-space:pre;">15</div>
<div style="position:absolute;left:24px;top:342px;width:656px;height:1px;background:#dadada;"></div>
<div style="position:absolute;left:1px;top:360px;width:22px;height:1px;background:#cdcdcd;"></div>
<div style="position:absolute;left:5.70px;top:347.49px;font-size:11px;line-height:11px;color:#262626;white-space:pre;">16</div>
<div style="position:absolute;left:24px;top:360px;width:656px;height:1px;background:#dadada;"></div>
<div style="position:absolute;left:1px;top:378px;width:22px;height:1px;background:#cdcdcd;"></div>
<div style="position:absolute;left:5.70px;top:365.49px;font-size:11px;line-height:11px;color:#262626;white-space:pre;">17</div>
<div style="position:absolute;left:24px;top:378px;width:656px;height:1px;background:#dadada;"></div>
<div style="position:absolute;left:1px;top:396px;width:22px;height:1px;background:#cdcdcd;"></div>
<div style="position:absolute;left:5.70px;top:383.49px;font-size:11px;line-height:11px;color:#262626;white-space:pre;">18</div>
<div style="position:absolute;left:24px;top:396px;width:656px;height:1px;background:#dadada;"></div>
<div style="position:absolute;left:1px;top:414px;width:22px;height:1px;background:#cdcdcd;"></div>
<div style="position:absolute;left:5.70px;top:401.49px;font-size:11px;line-height:11px;color:#262626;white-space:pre;">19</div>
<div style="position:absolute;left:24px;top:414px;width:656px;height:1px;background:#dadada;"></div>
<div style="position:absolute;left:1px;top:432px;width:22px;height:1px;background:#cdcdcd;"></div>
<div style="position:absolute;left:5.70px;top:419.49px;font-size:11px;line-height:11px;color:#262626;white-space:pre;">20</div>
<div style="position:absolute;left:24px;top:432px;width:656px;height:1px;background:#dadada;"></div>
<div style="position:absolute;left:1px;top:450px;width:22px;height:1px;background:#cdcdcd;"></div>
<div style="position:absolute;left:5.70px;top:437.49px;font-size:11px;line-height:11px;color:#262626;white-space:pre;">21</div>
<div style="position:absolute;left:24px;top:450px;width:656px;height:1px;background:#dadada;"></div>
<div style="position:absolute;left:1px;top:468px;width:22px;height:1px;background:#cdcdcd;"></div>
<div style="position:absolute;left:5.70px;top:455.49px;font-size:11px;line-height:11px;color:#262626;white-space:pre;">22</div>
<div style="position:absolute;left:24px;top:468px;width:656px;height:1px;background:#dadada;"></div>
<div style="position:absolute;left:1px;top:486px;width:22px;height:1px;background:#cdcdcd;"></div>
<div style="position:absolute;left:5.70px;top:473.49px;font-size:11px;line-height:11px;color:#262626;white-space:pre;">23</div>
<div style="position:absolute;left:24px;top:486px;width:656px;height:1px;background:#dadada;"></div>
<div style="position:absolute;left:1px;top:504px;width:22px;height:1px;background:#cdcdcd;"></div>
<div style="position:absolute;left:5.70px;top:491.49px;font-size:11px;line-height:11px;color:#262626;white-space:pre;">24</div>
<div style="position:absolute;left:24px;top:504px;width:656px;height:1px;background:#dadada;"></div>
<div style="position:absolute;left:1px;top:522px;width:22px;height:1px;background:#cdcdcd;"></div>
<div style="position:absolute;left:5.70px;top:509.49px;font-size:11px;line-height:11px;color:#262626;white-space:pre;">25</div>
<div style="position:absolute;left:24px;top:522px;width:656px;height:1px;background:#dadada;"></div>
<div style="position:absolute;left:1px;top:540px;width:22px;height:1px;background:#cdcdcd;"></div>
<div style="position:absolute;left:5.70px;top:527.49px;font-size:11px;line-height:11px;color:#262626;white-space:pre;">26</div>
<div style="position:absolute;left:24px;top:540px;width:656px;height:1px;background:#dadada;"></div>
<div style="position:absolute;left:1px;top:558px;width:22px;height:1px;background:#cdcdcd;"></div>
<div style="position:absolute;left:5.70px;top:545.49px;font-size:11px;line-height:11px;color:#262626;white-space:pre;">27</div>
<div style="position:absolute;left:24px;top:558px;width:656px;height:1px;background:#dadada;"></div>
<div style="position:absolute;left:1px;top:576px;width:22px;height:1px;background:#cdcdcd;"></div>
<div style="position:absolute;left:5.70px;top:563.49px;font-size:11px;line-height:11px;color:#262626;white-space:pre;">28</div>
<div style="position:absolute;left:24px;top:576px;width:656px;height:1px;background:#dadada;"></div>
<div style="position:absolute;left:1px;top:594px;width:22px;height:1px;background:#cdcdcd;"></div>
<div style="position:absolute;left:5.70px;top:581.49px;font-size:11px;line-height:11px;color:#262626;white-space:pre;">29</div>
<div style="position:absolute;left:24px;top:594px;width:656px;height:1px;background:#dadada;"></div>
<div style="position:absolute;left:1px;top:612px;width:22px;height:1px;background:#cdcdcd;"></div>
<div style="position:absolute;left:5.70px;top:599.49px;font-size:11px;line-height:11px;color:#262626;white-space:pre;">30</div>
<div style="position:absolute;left:24px;top:612px;width:656px;height:1px;background:#dadada;"></div>
<div style="position:absolute;left:1px;top:630px;width:22px;height:1px;background:#cdcdcd;"></div>
<div style="position:absolute;left:5.70px;top:617.49px;font-size:11px;line-height:11px;color:#262626;white-space:pre;">31</div>
<div style="position:absolute;left:24px;top:630px;width:656px;height:1px;background:#dadada;"></div>
<div style="position:absolute;left:1px;top:648px;width:22px;height:1px;background:#cdcdcd;"></div>
<div style="position:absolute;left:5.70px;top:635.49px;font-size:11px;line-height:11px;color:#262626;white-space:pre;">32</div>
<div style="position:absolute;left:24px;top:648px;width:656px;height:1px;background:#dadada;"></div>
<div style="position:absolute;left:1px;top:666px;width:22px;height:1px;background:#cdcdcd;"></div>
<div style="position:absolute;left:5.70px;top:653.49px;font-size:11px;line-height:11px;color:#262626;white-space:pre;">33</div>
<div style="position:absolute;left:24px;top:666px;width:656px;height:1px;background:#dadada;"></div>
<div style="position:absolute;left:23px;top:161px;width:1px;height:496px;background:#b5b5b5;"></div>
<div style="position:absolute;left:23px;top:198px;width:2px;height:19px;background:#217346;"></div>
<div style="position:absolute;left:105px;top:180px;width:1px;height:477px;background:#dadada;"></div>
<div style="position:absolute;left:170px;top:180px;width:1px;height:477px;background:#dadada;"></div>
<div style="position:absolute;left:247px;top:180px;width:1px;height:477px;background:#dadada;"></div>
<div style="position:absolute;left:333px;top:180px;width:1px;height:477px;background:#dadada;"></div>
<div style="position:absolute;left:391px;top:180px;width:1px;height:477px;background:#dadada;"></div>
<div style="position:absolute;left:474px;top:180px;width:1px;height:477px;background:#dadada;"></div>
<div style="position:absolute;left:567px;top:180px;width:1px;height:477px;background:#dadada;"></div>
<div style="position:absolute;left:652px;top:180px;width:1px;height:477px;background:#dadada;"></div>
<div style="position:absolute;left:679px;top:180px;width:1px;height:477px;background:#9e9e9e;"></div>
<div style="position:absolute;left:24px;top:180px;width:310px;height:18px;background:#70ad47;"></div>
<div style="position:absolute;left:26.50px;top:183.64px;font-size:12px;line-height:12px;color:#fff;white-space:pre;font-weight:bold;letter-spacing:0.553px;">Date</div>
<div style="position:absolute;left:108.50px;top:183.64px;font-size:12px;line-height:12px;color:#fff;white-space:pre;font-weight:bold;letter-spacing:0.395px;">Buyer</div>
<div style="position:absolute;left:173.40px;top:183.64px;font-size:12px;line-height:12px;color:#fff;white-space:pre;font-weight:bold;letter-spacing:0.627px;">Type</div>
<div style="position:absolute;left:249.60px;top:183.64px;font-size:12px;line-height:12px;color:#fff;white-space:pre;font-weight:bold;letter-spacing:0.860px;">Amount</div>
<div style="position:absolute;left:24px;top:198px;width:310px;height:18px;background:#e2efda;"></div>
<div style="position:absolute;left:26.50px;top:201.64px;font-size:12px;line-height:12px;color:#1a1a1a;white-space:pre;transform:scaleX(0.9314);transform-origin:0 0;-webkit-text-stroke:0.12px #1a1a1a;">01-Jan</div>
<div style="position:absolute;left:108.50px;top:201.64px;font-size:12px;line-height:12px;color:#1a1a1a;white-space:pre;letter-spacing:0.530px;-webkit-text-stroke:0.12px #1a1a1a;">Mom</div>
<div style="position:absolute;left:173.40px;top:201.64px;font-size:12px;line-height:12px;color:#1a1a1a;white-space:pre;letter-spacing:-0.113px;-webkit-text-stroke:0.12px #1a1a1a;">Fuel</div>
<div style="position:absolute;left:312.70px;top:201.64px;font-size:12px;line-height:12px;color:#1a1a1a;white-space:pre;transform:scaleX(0.9331);transform-origin:0 0;-webkit-text-stroke:0.12px #1a1a1a;">$74</div>
<div style="position:absolute;left:24px;top:216px;width:310px;height:18px;background:#d9d9d9;"></div>
<div style="position:absolute;left:26.50px;top:219.64px;font-size:12px;line-height:12px;color:#1a1a1a;white-space:pre;transform:scaleX(0.9314);transform-origin:0 0;-webkit-text-stroke:0.12px #1a1a1a;">15-Jan</div>
<div style="position:absolute;left:108.50px;top:219.64px;font-size:12px;line-height:12px;color:#1a1a1a;white-space:pre;letter-spacing:0.530px;-webkit-text-stroke:0.12px #1a1a1a;">Mom</div>
<div style="position:absolute;left:173.40px;top:219.64px;font-size:12px;line-height:12px;color:#1a1a1a;white-space:pre;letter-spacing:-0.120px;-webkit-text-stroke:0.12px #1a1a1a;">Food</div>
<div style="position:absolute;left:306.60px;top:219.64px;font-size:12px;line-height:12px;color:#1a1a1a;white-space:pre;transform:scaleX(0.9288);transform-origin:0 0;-webkit-text-stroke:0.12px #1a1a1a;">$235</div>
<div style="position:absolute;left:24px;top:234px;width:310px;height:18px;background:#e2efda;"></div>
<div style="position:absolute;left:26.50px;top:237.64px;font-size:12px;line-height:12px;color:#1a1a1a;white-space:pre;transform:scaleX(0.9314);transform-origin:0 0;-webkit-text-stroke:0.12px #1a1a1a;">17-Jan</div>
<div style="position:absolute;left:108.50px;top:237.64px;font-size:12px;line-height:12px;color:#1a1a1a;white-space:pre;letter-spacing:-0.660px;-webkit-text-stroke:0.12px #1a1a1a;">Dad</div>
<div style="position:absolute;left:173.40px;top:237.64px;font-size:12px;line-height:12px;color:#1a1a1a;white-space:pre;letter-spacing:-0.076px;-webkit-text-stroke:0.12px #1a1a1a;">Sports</div>
<div style="position:absolute;left:312.70px;top:237.64px;font-size:12px;line-height:12px;color:#1a1a1a;white-space:pre;transform:scaleX(0.9331);transform-origin:0 0;-webkit-text-stroke:0.12px #1a1a1a;">$20</div>
<div style="position:absolute;left:24px;top:252px;width:310px;height:18px;background:#d9d9d9;"></div>
<div style="position:absolute;left:26.50px;top:255.64px;font-size:12px;line-height:12px;color:#1a1a1a;white-space:pre;transform:scaleX(0.9314);transform-origin:0 0;-webkit-text-stroke:0.12px #1a1a1a;">21-Jan</div>
<div style="position:absolute;left:108.50px;top:255.64px;font-size:12px;line-height:12px;color:#1a1a1a;white-space:pre;letter-spacing:0.240px;-webkit-text-stroke:0.12px #1a1a1a;">Kelly</div>
<div style="position:absolute;left:173.40px;top:255.64px;font-size:12px;line-height:12px;color:#1a1a1a;white-space:pre;letter-spacing:-0.215px;-webkit-text-stroke:0.12px #1a1a1a;">Books</div>
<div style="position:absolute;left:306.60px;top:255.64px;font-size:12px;line-height:12px;color:#1a1a1a;white-space:pre;transform:scaleX(0.9288);transform-origin:0 0;-webkit-text-stroke:0.12px #1a1a1a;">$125</div>
<div style="position:absolute;left:24px;top:270px;width:310px;height:18px;background:#e2efda;"></div>
<div style="position:absolute;left:26.50px;top:273.64px;font-size:12px;line-height:12px;color:#1a1a1a;white-space:pre;transform:scaleX(0.9674);transform-origin:0 0;-webkit-text-stroke:0.12px #1a1a1a;">02-Feb</div>
<div style="position:absolute;left:108.50px;top:273.64px;font-size:12px;line-height:12px;color:#1a1a1a;white-space:pre;letter-spacing:0.530px;-webkit-text-stroke:0.12px #1a1a1a;">Mom</div>
<div style="position:absolute;left:173.40px;top:273.64px;font-size:12px;line-height:12px;color:#1a1a1a;white-space:pre;letter-spacing:-0.120px;-webkit-text-stroke:0.12px #1a1a1a;">Food</div>
<div style="position:absolute;left:306.60px;top:273.64px;font-size:12px;line-height:12px;color:#1a1a1a;white-space:pre;transform:scaleX(0.9288);transform-origin:0 0;-webkit-text-stroke:0.12px #1a1a1a;">$235</div>
<div style="position:absolute;left:24px;top:288px;width:310px;height:18px;background:#d9d9d9;"></div>
<div style="position:absolute;left:26.50px;top:291.64px;font-size:12px;line-height:12px;color:#1a1a1a;white-space:pre;transform:scaleX(0.9674);transform-origin:0 0;-webkit-text-stroke:0.12px #1a1a1a;">20-Feb</div>
<div style="position:absolute;left:108.50px;top:291.64px;font-size:12px;line-height:12px;color:#1a1a1a;white-space:pre;letter-spacing:0.240px;-webkit-text-stroke:0.12px #1a1a1a;">Kelly</div>
<div style="position:absolute;left:173.40px;top:291.64px;font-size:12px;line-height:12px;color:#1a1a1a;white-space:pre;letter-spacing:0.170px;-webkit-text-stroke:0.12px #1a1a1a;">Music</div>
<div style="position:absolute;left:312.70px;top:291.64px;font-size:12px;line-height:12px;color:#1a1a1a;white-space:pre;transform:scaleX(0.9331);transform-origin:0 0;-webkit-text-stroke:0.12px #1a1a1a;">$20</div>
<div style="position:absolute;left:24px;top:306px;width:310px;height:18px;background:#e2efda;"></div>
<div style="position:absolute;left:26.50px;top:309.64px;font-size:12px;line-height:12px;color:#1a1a1a;white-space:pre;transform:scaleX(0.9674);transform-origin:0 0;-webkit-text-stroke:0.12px #1a1a1a;">25-Feb</div>
<div style="position:absolute;left:108.50px;top:309.64px;font-size:12px;line-height:12px;color:#1a1a1a;white-space:pre;letter-spacing:0.240px;-webkit-text-stroke:0.12px #1a1a1a;">Kelly</div>
<div style="position:absolute;left:173.40px;top:309.64px;font-size:12px;line-height:12px;color:#1a1a1a;white-space:pre;letter-spacing:0.090px;-webkit-text-stroke:0.12px #1a1a1a;">Tickets</div>
<div style="position:absolute;left:306.60px;top:309.64px;font-size:12px;line-height:12px;color:#1a1a1a;white-space:pre;transform:scaleX(0.9288);transform-origin:0 0;-webkit-text-stroke:0.12px #1a1a1a;">$125</div>
<div style="position:absolute;left:392px;top:198px;width:175px;height:18px;background:#d9e1f2;"></div>
<div style="position:absolute;left:392px;top:216px;width:175px;height:1px;background:#b4c6e7;"></div>
<div style="position:absolute;left:392px;top:217px;width:175px;height:215px;background:#fff;"></div>
<div style="position:absolute;left:392px;top:234px;width:175px;height:1px;background:#b4c6e7;"></div>
<svg style="position:absolute;left:395px;top:221px;" width="9" height="8" viewBox="0 0 9 8"><rect x="0.5" y="0.5" width="8" height="7" rx="1" fill="#eef0f4" stroke="#a0a8b8" stroke-width="1"/><rect x="2" y="3.5" width="5" height="1.2" fill="#506080"/></svg>
<div style="position:absolute;left:405.40px;top:220.07px;font-size:11.5px;line-height:11.5px;color:#1a1a1a;white-space:pre;font-weight:bold;letter-spacing:-0.508px;">Books</div>
<div style="position:absolute;left:547.00px;top:219.64px;font-size:12px;line-height:12px;color:#1a1a1a;white-space:pre;font-weight:bold;transform:scaleX(0.9082);transform-origin:0 0;">125</div>
<div style="position:absolute;left:417.60px;top:237.64px;font-size:12px;line-height:12px;color:#1a1a1a;white-space:pre;letter-spacing:0.190px;-webkit-text-stroke:0.12px #1a1a1a;">Kelly</div>
<div style="position:absolute;left:547.00px;top:237.64px;font-size:12px;line-height:12px;color:#1a1a1a;white-space:pre;transform:scaleX(0.9082);transform-origin:0 0;-webkit-text-stroke:0.12px #1a1a1a;">125</div>
<div style="position:absolute;left:392px;top:270px;width:175px;height:1px;background:#b4c6e7;"></div>
<svg style="position:absolute;left:395px;top:257px;" width="9" height="8" viewBox="0 0 9 8"><rect x="0.5" y="0.5" width="8" height="7" rx="1" fill="#eef0f4" stroke="#a0a8b8" stroke-width="1"/><rect x="2" y="3.5" width="5" height="1.2" fill="#506080"/></svg>
<div style="position:absolute;left:405.40px;top:256.07px;font-size:11.5px;line-height:11.5px;color:#1a1a1a;white-space:pre;font-weight:bold;letter-spacing:-0.272px;">Food</div>
<div style="position:absolute;left:547.00px;top:255.64px;font-size:12px;line-height:12px;color:#1a1a1a;white-space:pre;font-weight:bold;transform:scaleX(0.9082);transform-origin:0 0;">470</div>
<div style="position:absolute;left:417.60px;top:273.64px;font-size:12px;line-height:12px;color:#1a1a1a;white-space:pre;letter-spacing:0.480px;-webkit-text-stroke:0.12px #1a1a1a;">Mom</div>
<div style="position:absolute;left:547.00px;top:273.64px;font-size:12px;line-height:12px;color:#1a1a1a;white-space:pre;transform:scaleX(0.9082);transform-origin:0 0;-webkit-text-stroke:0.12px #1a1a1a;">470</div>
<div style="position:absolute;left:392px;top:306px;width:175px;height:1px;background:#b4c6e7;"></div>
<svg style="position:absolute;left:395px;top:293px;" width="9" height="8" viewBox="0 0 9 8"><rect x="0.5" y="0.5" width="8" height="7" rx="1" fill="#eef0f4" stroke="#a0a8b8" stroke-width="1"/><rect x="2" y="3.5" width="5" height="1.2" fill="#506080"/></svg>
<div style="position:absolute;left:405.40px;top:292.07px;font-size:11.5px;line-height:11.5px;color:#1a1a1a;white-space:pre;font-weight:bold;letter-spacing:0.089px;">Fuel</div>
<div style="position:absolute;left:553.20px;top:291.64px;font-size:12px;line-height:12px;color:#1a1a1a;white-space:pre;font-weight:bold;transform:scaleX(0.9009);transform-origin:0 0;">74</div>
<div style="position:absolute;left:417.60px;top:309.64px;font-size:12px;line-height:12px;color:#1a1a1a;white-space:pre;letter-spacing:0.480px;-webkit-text-stroke:0.12px #1a1a1a;">Mom</div>
<div style="position:absolute;left:553.20px;top:309.64px;font-size:12px;line-height:12px;color:#1a1a1a;white-space:pre;transform:scaleX(0.9009);transform-origin:0 0;-webkit-text-stroke:0.12px #1a1a1a;">74</div>
<div style="position:absolute;left:392px;top:342px;width:175px;height:1px;background:#b4c6e7;"></div>
<svg style="position:absolute;left:395px;top:329px;" width="9" height="8" viewBox="0 0 9 8"><rect x="0.5" y="0.5" width="8" height="7" rx="1" fill="#eef0f4" stroke="#a0a8b8" stroke-width="1"/><rect x="2" y="3.5" width="5" height="1.2" fill="#506080"/></svg>
<div style="position:absolute;left:405.40px;top:328.07px;font-size:11.5px;line-height:11.5px;color:#1a1a1a;white-space:pre;font-weight:bold;letter-spacing:0.249px;">Music</div>
<div style="position:absolute;left:553.20px;top:327.64px;font-size:12px;line-height:12px;color:#1a1a1a;white-space:pre;font-weight:bold;transform:scaleX(0.9009);transform-origin:0 0;">20</div>
<div style="position:absolute;left:417.60px;top:345.64px;font-size:12px;line-height:12px;color:#1a1a1a;white-space:pre;letter-spacing:0.190px;-webkit-text-stroke:0.12px #1a1a1a;">Kelly</div>
<div style="position:absolute;left:553.20px;top:345.64px;font-size:12px;line-height:12px;color:#1a1a1a;white-space:pre;transform:scaleX(0.9009);transform-origin:0 0;-webkit-text-stroke:0.12px #1a1a1a;">20</div>
<div style="position:absolute;left:392px;top:378px;width:175px;height:1px;background:#b4c6e7;"></div>
<svg style="position:absolute;left:395px;top:365px;" width="9" height="8" viewBox="0 0 9 8"><rect x="0.5" y="0.5" width="8" height="7" rx="1" fill="#eef0f4" stroke="#a0a8b8" stroke-width="1"/><rect x="2" y="3.5" width="5" height="1.2" fill="#506080"/></svg>
<div style="position:absolute;left:405.40px;top:364.07px;font-size:11.5px;line-height:11.5px;color:#1a1a1a;white-space:pre;font-weight:bold;letter-spacing:-0.280px;">Sports</div>
<div style="position:absolute;left:553.20px;top:363.64px;font-size:12px;line-height:12px;color:#1a1a1a;white-space:pre;font-weight:bold;transform:scaleX(0.9009);transform-origin:0 0;">20</div>
<div style="position:absolute;left:417.60px;top:381.64px;font-size:12px;line-height:12px;color:#1a1a1a;white-space:pre;letter-spacing:-0.560px;-webkit-text-stroke:0.12px #1a1a1a;">Dad</div>
<div style="position:absolute;left:553.20px;top:381.64px;font-size:12px;line-height:12px;color:#1a1a1a;white-space:pre;transform:scaleX(0.9009);transform-origin:0 0;-webkit-text-stroke:0.12px #1a1a1a;">20</div>
<div style="position:absolute;left:392px;top:414px;width:175px;height:1px;background:#b4c6e7;"></div>
<svg style="position:absolute;left:395px;top:401px;" width="9" height="8" viewBox="0 0 9 8"><rect x="0.5" y="0.5" width="8" height="7" rx="1" fill="#eef0f4" stroke="#a0a8b8" stroke-width="1"/><rect x="2" y="3.5" width="5" height="1.2" fill="#506080"/></svg>
<div style="position:absolute;left:405.40px;top:400.07px;font-size:11.5px;line-height:11.5px;color:#1a1a1a;white-space:pre;font-weight:bold;letter-spacing:-0.141px;">Tickets</div>
<div style="position:absolute;left:547.00px;top:399.64px;font-size:12px;line-height:12px;color:#1a1a1a;white-space:pre;font-weight:bold;transform:scaleX(0.9082);transform-origin:0 0;">125</div>
<div style="position:absolute;left:417.60px;top:417.64px;font-size:12px;line-height:12px;color:#1a1a1a;white-space:pre;letter-spacing:0.190px;-webkit-text-stroke:0.12px #1a1a1a;">Kelly</div>
<div style="position:absolute;left:547.00px;top:417.64px;font-size:12px;line-height:12px;color:#1a1a1a;white-space:pre;transform:scaleX(0.9082);transform-origin:0 0;-webkit-text-stroke:0.12px #1a1a1a;">125</div>
<div style="position:absolute;left:392px;top:432px;width:175px;height:18px;background:#d9e1f2;"></div>
<div style="position:absolute;left:392px;top:432px;width:175px;height:1px;background:#b4c6e7;"></div>
<div style="position:absolute;left:393.90px;top:436.07px;font-size:11.5px;line-height:11.5px;color:#1a1a1a;white-space:pre;font-weight:bold;letter-spacing:0.035px;">Grand Total</div>
<div style="position:absolute;left:547.00px;top:435.64px;font-size:12px;line-height:12px;color:#1a1a1a;white-space:pre;font-weight:bold;transform:scaleX(0.9082);transform-origin:0 0;">834</div>
<div style="position:absolute;left:394.00px;top:202.32px;font-size:11.2px;line-height:11.2px;color:#1a1a1a;white-space:pre;font-weight:bold;letter-spacing:-0.135px;">Row Labels</div>
<div style="position:absolute;left:458px;top:199px;width:16px;height:16px;background:#f4f4f4;border:1px solid #c8c8c8;"></div>
<svg style="position:absolute;left:462.5px;top:205.5px;" width="7" height="4" viewBox="0 0 7 4"><path d="M0 0 H7 L3.5 3.5 Z" fill="#666"/></svg>
<div style="position:absolute;left:476.90px;top:201.81px;font-size:11.8px;line-height:11.8px;color:#1a1a1a;white-space:pre;font-weight:bold;letter-spacing:-0.115px;">Sum of Amount</div>
<div style="position:absolute;left:390px;top:197px;width:86px;height:21px;border:2px solid #217346;"></div>
<div style="position:absolute;left:472px;top:213px;width:6px;height:6px;background:#217346;border:1px solid #fff;"></div>
<div style="position:absolute;left:499.00px;top:543.64px;font-size:12px;line-height:12px;color:#1a1a1a;white-space:pre;transform:scaleX(0.9418);transform-origin:0 0;-webkit-text-stroke:0.12px #1a1a1a;">0.563549161</div>
<div style="position:absolute;left:680px;top:161px;width:18px;height:496px;background:#e9e9e9;"></div>
<div style="position:absolute;left:683px;top:163px;width:13px;height:14px;background:#fff;border:1px solid #c6c6c6;"></div>
<svg style="position:absolute;left:686px;top:167px;" width="8" height="5" viewBox="0 0 8 5"><path d="M0 4.5 L4 0.5 L8 4.5 Z" fill="#666"/></svg>
<div style="position:absolute;left:683px;top:178px;width:13px;height:85px;background:#dedede;"></div>
<div style="position:absolute;left:683px;top:263px;width:13px;height:372px;background:#fff;border:1px solid #b8b8b8;"></div>
<div style="position:absolute;left:683px;top:635px;width:13px;height:14px;background:#dedede;"></div>
<div style="position:absolute;left:683px;top:649px;width:13px;height:8px;background:#fff;border:1px solid #c6c6c6;"></div>
<svg style="position:absolute;left:686px;top:652px;" width="8" height="5" viewBox="0 0 8 5"><path d="M0 0.5 L4 4.5 L8 0.5 Z" fill="#666"/></svg>
<div style="position:absolute;left:699px;top:160px;width:1px;height:497px;background:#c6c6c6;"></div>
<div style="position:absolute;left:24px;top:331px;width:363px;height:291px;background:#fff;border:1px solid #d9d9d9;border-left:none;"></div>
<div style="position:absolute;left:33px;top:338px;width:73px;height:15px;background:linear-gradient(#e4e4e4,#d0d0d0);"></div>
<div style="position:absolute;left:36.00px;top:341.34px;font-size:10px;line-height:10px;color:#262626;white-space:pre;letter-spacing:-0.113px;">Sum of Amount</div>
<div style="position:absolute;left:188.50px;top:366.96px;font-size:16px;line-height:16px;color:#6e6e6e;white-space:pre;letter-spacing:-0.365px;">Total</div>
<svg style="position:absolute;left:0;top:0" width="935" height="657"><path d="M163.95 491.10 L163.95 398.90 A92.2 92.2 0 0 1 238.50 436.85 Z" fill="#4472c4" stroke="#fff" stroke-width="0.4"/><path d="M163.95 491.10 L238.50 436.85 A92.2 92.2 0 1 1 74.17 512.10 Z" fill="#ed7d31" stroke="#fff" stroke-width="0.4"/><path d="M163.95 491.10 L74.17 512.10 A92.2 92.2 0 0 1 76.66 461.42 Z" fill="#a5a5a5" stroke="#fff" stroke-width="0.4"/><path d="M163.95 491.10 L76.66 461.42 A92.2 92.2 0 0 1 82.10 448.66 Z" fill="#ffc000" stroke="#fff" stroke-width="0.4"/><path d="M163.95 491.10 L82.10 448.66 A92.2 92.2 0 0 1 89.40 436.85 Z" fill="#5b9bd5" stroke="#fff" stroke-width="0.4"/><path d="M163.95 491.10 L89.40 436.85 A92.2 92.2 0 0 1 163.95 398.90 Z" fill="#70ad47" stroke="#fff" stroke-width="0.4"/></svg>
<div style="position:absolute;left:305px;top:415px;width:72px;height:15px;background:linear-gradient(#e6e6e6,#cfcfcf);"></div>
<div style="position:absolute;left:308.80px;top:417.61px;font-size:10.5px;line-height:10.5px;color:#262626;white-space:pre;letter-spacing:-0.528px;">Type</div>
<svg style="position:absolute;left:366.5px;top:421px;" width="7" height="4" viewBox="0 0 7 4"><path d="M0 0 H7 L3.5 3.5 Z" fill="#333"/></svg>
<div style="position:absolute;left:305px;top:431px;width:72px;height:15px;background:linear-gradient(#e6e6e6,#cfcfcf);"></div>
<div style="position:absolute;left:308.50px;top:433.41px;font-size:10.5px;line-height:10.5px;color:#262626;white-space:pre;letter-spacing:-0.726px;">Buyer</div>
<svg style="position:absolute;left:366.5px;top:437px;" width="7" height="4" viewBox="0 0 7 4"><path d="M0 0 H7 L3.5 3.5 Z" fill="#333"/></svg>
<div style="position:absolute;left:310px;top:455.2px;width:6px;height:5.800000000000011px;background:#4472c4;"></div>
<div style="position:absolute;left:319.00px;top:452.44px;font-size:10px;line-height:10px;color:#595959;white-space:pre;letter-spacing:-0.275px;">Books Kelly</div>
<div style="position:absolute;left:310px;top:475.4px;width:6px;height:5.800000000000011px;background:#ed7d31;"></div>
<div style="position:absolute;left:319.00px;top:472.63px;font-size:10px;line-height:10px;color:#595959;white-space:pre;letter-spacing:-0.029px;">Food Mom</div>
<div style="position:absolute;left:310px;top:495.59999999999997px;width:6px;height:5.800000000000011px;background:#a5a5a5;"></div>
<div style="position:absolute;left:319.00px;top:492.83px;font-size:10px;line-height:10px;color:#595959;white-space:pre;letter-spacing:-0.093px;">Fuel Mom</div>
<div style="position:absolute;left:310px;top:515.8px;width:6px;height:5.7999999999999545px;background:#ffc000;"></div>
<div style="position:absolute;left:319.00px;top:513.03px;font-size:10px;line-height:10px;color:#595959;white-space:pre;letter-spacing:-0.145px;">Music Kelly</div>
<div style="position:absolute;left:310px;top:536.0px;width:6px;height:5.7999999999999545px;background:#5b9bd5;"></div>
<div style="position:absolute;left:319.00px;top:533.24px;font-size:10px;line-height:10px;color:#595959;white-space:pre;">Sports Dad</div>
<div style="position:absolute;left:310px;top:556.2px;width:6px;height:5.7999999999999545px;background:#70ad47;"></div>
<div style="position:absolute;left:319.00px;top:553.44px;font-size:10px;line-height:10px;color:#595959;white-space:pre;">Tickets Kelly</div>
<div style="position:absolute;left:222px;top:531px;width:166px;height:31px;background:rgba(0,0,0,0.18);filter:blur(1.5px);"></div>
<div style="position:absolute;left:219px;top:528.5px;width:166px;height:30.5px;background:#fff;border:1px solid #767676;"></div>
<div style="position:absolute;left:224.50px;top:531.81px;font-size:10.5px;line-height:10.5px;color:#5e5e5e;white-space:pre;letter-spacing:0.159px;">Series "Total" Point "Food Mom"</div>
<div style="position:absolute;left:224.50px;top:545.31px;font-size:10.5px;line-height:10.5px;color:#5e5e5e;white-space:pre;letter-spacing:-0.258px;">Value: 470 (56%)</div>
<div style="position:absolute;left:350px;top:597.5px;width:13.5px;height:14.5px;background:#d9d9d9;"></div>
<div style="position:absolute;left:364.5px;top:597.5px;width:13.5px;height:14.5px;background:#e2e2e2;"></div>
<svg style="position:absolute;left:353px;top:601px;" width="8" height="8" viewBox="0 0 8 8"><path d="M4 0.5 V7.5 M0.5 4 H7.5" stroke="#8a8a8a" stroke-width="1.6"/></svg>
<svg style="position:absolute;left:367.5px;top:601px;" width="8" height="8" viewBox="0 0 8 8"><path d="M0.5 4 H7.5" stroke="#9a9a9a" stroke-width="1.6"/></svg>
<div style="position:absolute;left:700px;top:153px;width:234px;height:504px;background:#e6e6e6;"></div>
<div style="position:absolute;left:712.00px;top:177.39px;font-size:17.5px;line-height:17.5px;color:#3f8c64;white-space:pre;letter-spacing:0.356px;">PivotTable Fields</div>
<svg style="position:absolute;left:871px;top:180px;" width="9" height="6" viewBox="0 0 9 6"><path d="M0 0 H9 L4.5 5 Z" fill="#555"/></svg>
<svg style="position:absolute;left:907px;top:178px;" width="10" height="10" viewBox="0 0 10 10"><path d="M1 1 L9 9 M9 1 L1 9" stroke="#444" stroke-width="1.5"/></svg>
<div style="position:absolute;left:712.00px;top:210.99px;font-size:11px;line-height:11px;color:#404040;white-space:pre;letter-spacing:-0.145px;">Choose fields to add to report:</div>
<div style="position:absolute;left:882px;top:205px;width:39px;height:23px;background:#fff;border:1px solid #c6c6c6;"></div>
<svg style="position:absolute;left:890px;top:209px;" width="14" height="14" viewBox="0 0 14 14"><g transform="translate(7 7)"><circle r="4.2" fill="none" stroke="#8c8c8c" stroke-width="2.6"/><g stroke="#8c8c8c" stroke-width="2.4"><path d="M0 -6.5 V-4 M0 6.5 V4 M-6.5 0 H-4 M6.5 0 H4 M-4.6 -4.6 L-2.9 -2.9 M4.6 4.6 L2.9 2.9 M-4.6 4.6 L-2.9 2.9 M4.6 -4.6 L2.9 -2.9"/></g><circle r="1.6" fill="#fff"/></g></svg>
<svg style="position:absolute;left:910px;top:214px;" width="7" height="4" viewBox="0 0 7 4"><path d="M0 0 H7 L3.5 3.5 Z" fill="#555"/></svg>
<div style="position:absolute;left:711px;top:240px;width:210px;height:18px;background:#fff;border:1px solid #a9a9a9;"></div>
<div style="position:absolute;left:713.00px;top:243.69px;font-size:11px;line-height:11px;color:#666;white-space:pre;letter-spacing:-0.574px;">Search</div>
<svg style="position:absolute;left:906px;top:243px;" width="12" height="12" viewBox="0 0 12 12"><circle cx="7" cy="5" r="3.6" fill="none" stroke="#2f6fbf" stroke-width="1.5"/><path d="M4.5 7.5 L1 11" stroke="#2f6fbf" stroke-width="1.8"/></svg>
<div style="position:absolute;left:711px;top:272px;width:210px;height:151px;background:#fff;"></div>
<div style="position:absolute;left:712px;top:273px;width:12px;height:12px;background:#fff;border:1px solid #8a8a8a;"></div>
<div style="position:absolute;left:729.70px;top:274.19px;font-size:11px;line-height:11px;color:#333333;white-space:pre;letter-spacing:-0.637px;">Date</div>
<div style="position:absolute;left:712px;top:290px;width:12px;height:12px;background:#fff;border:1px solid #8a8a8a;"></div>
<svg style="position:absolute;left:713px;top:291px;" width="10" height="10" viewBox="0 0 10 10"><path d="M1.5 5 L4 7.8 L8.8 1.8" fill="none" stroke="#555" stroke-width="1.1"/></svg>
<div style="position:absolute;left:729.70px;top:291.19px;font-size:11px;line-height:11px;color:#333333;white-space:pre;font-weight:bold;letter-spacing:-0.471px;">Buyer</div>
<div style="position:absolute;left:712px;top:307px;width:12px;height:12px;background:#fff;border:1px solid #8a8a8a;"></div>
<svg style="position:absolute;left:713px;top:308px;" width="10" height="10" viewBox="0 0 10 10"><path d="M1.5 5 L4 7.8 L8.8 1.8" fill="none" stroke="#555" stroke-width="1.1"/></svg>
<div style="position:absolute;left:729.70px;top:308.19px;font-size:11px;line-height:11px;color:#333333;white-space:pre;font-weight:bold;letter-spacing:-0.353px;">Type</div>
<div style="position:absolute;left:712px;top:324px;width:12px;height:12px;background:#fff;border:1px solid #8a8a8a;"></div>
<svg style="position:absolute;left:713px;top:325px;" width="10" height="10" viewBox="0 0 10 10"><path d="M1.5 5 L4 7.8 L8.8 1.8" fill="none" stroke="#555" stroke-width="1.1"/></svg>
<div style="position:absolute;left:729.70px;top:325.19px;font-size:11px;line-height:11px;color:#333333;white-space:pre;font-weight:bold;letter-spacing:-0.325px;">Amount</div>
<div style="position:absolute;left:712.00px;top:349.69px;font-size:11px;line-height:11px;color:#404040;white-space:pre;letter-spacing:-0.143px;">More Tables...</div>
<div style="position:absolute;left:712px;top:438px;width:212px;height:1px;background:repeating-linear-gradient(90deg,#c0c0c0 0 1px,transparent 1px 3px);"></div>
<div style="position:absolute;left:714.60px;top:444.69px;font-size:11px;line-height:11px;color:#404040;white-space:pre;letter-spacing:-0.266px;">Drag fields between areas below:</div>
<div style="position:absolute;left:713px;top:472px;width:1px;height:169px;background:#b0b0b0;"></div>
<svg style="position:absolute;left:718px;top:474px;" width="10" height="10" viewBox="0 0 10 10"><path d="M0 0 H10 L6 4.5 V9.5 L4 8.5 V4.5 Z" fill="#8c8c8c"/></svg>
<div style="position:absolute;left:735.20px;top:473.69px;font-size:11px;line-height:11px;color:#404040;white-space:pre;letter-spacing:-0.387px;">Filters</div>
<svg style="position:absolute;left:824.5px;top:474.5px;" width="8" height="9" viewBox="0 0 8 9"><rect x="0" y="0" width="1.6" height="9" fill="#aaa"/><rect x="2.7" y="0" width="1.6" height="9" fill="#aaa"/><rect x="5.4" y="0" width="1.6" height="9" fill="#aaa"/></svg>
<div style="position:absolute;left:840.70px;top:473.69px;font-size:11px;line-height:11px;color:#404040;white-space:pre;letter-spacing:-0.099px;">Columns</div>
<div style="position:absolute;left:714px;top:489px;width:98px;height:60px;background:#fff;"></div>
<div style="position:absolute;left:820px;top:489px;width:102px;height:60px;background:#fff;"></div>
<div style="position:absolute;left:713px;top:555px;width:209px;height:1px;background:#c0c0c0;"></div>
<svg style="position:absolute;left:718.5px;top:564px;" width="9" height="9" viewBox="0 0 9 9"><rect x="0" y="0" width="9" height="1.6" fill="#a6a6a6"/><rect x="0" y="2.4" width="9" height="1.6" fill="#a6a6a6"/><rect x="0" y="4.8" width="9" height="1.6" fill="#a6a6a6"/><rect x="0" y="7.2" width="9" height="1.6" fill="#a6a6a6"/></svg>
<div style="position:absolute;left:735.20px;top:563.19px;font-size:11px;line-height:11px;color:#404040;white-space:pre;letter-spacing:-0.967px;">Rows</div>
<svg style="position:absolute;left:824.5px;top:563.5px;" width="10" height="10" viewBox="0 0 10 10"><path d="M0.5 0.5 H9.5 V1.5 H2.3 L5.6 5 L2.3 8.5 H9.5 V9.5 H0.5 V8.7 L4.2 5 L0.5 1.3 Z" fill="#8a8a8a"/></svg>
<div style="position:absolute;left:840.20px;top:563.19px;font-size:11px;line-height:11px;color:#404040;white-space:pre;letter-spacing:-0.407px;">Values</div>
<div style="position:absolute;left:714px;top:579px;width:98px;height:61px;background:#fff;"></div>
<div style="position:absolute;left:820px;top:579px;width:102px;height:61px;background:#fff;"></div>
<div style="position:absolute;left:715px;top:581.5px;width:96px;height:16.5px;background:#fff;border:1px solid #c3c3c3;"></div>
<div style="position:absolute;left:722.00px;top:584.69px;font-size:11px;line-height:11px;color:#444;white-space:pre;letter-spacing:-0.223px;">Type</div>
<svg style="position:absolute;left:796.5px;top:587px;" width="7" height="4" viewBox="0 0 7 4"><path d="M0 0 H7 L3.5 3.5 Z" fill="#555"/></svg>
<div style="position:absolute;left:715px;top:601px;width:96px;height:16px;background:#fff;border:1px solid #c3c3c3;"></div>
<div style="position:absolute;left:722.00px;top:604.19px;font-size:11px;line-height:11px;color:#444;white-space:pre;letter-spacing:-0.603px;">Buyer</div>
<svg style="position:absolute;left:796.5px;top:606.5px;" width="7" height="4" viewBox="0 0 7 4"><path d="M0 0 H7 L3.5 3.5 Z" fill="#555"/></svg>
<div style="position:absolute;left:820.5px;top:581.5px;width:100.5px;height:16.5px;background:#fff;border:1px solid #c3c3c3;"></div>
<div style="position:absolute;left:827.00px;top:584.69px;font-size:11px;line-height:11px;color:#444;white-space:pre;letter-spacing:-0.091px;">Sum of Amou...</div>
<svg style="position:absolute;left:906.5px;top:587px;" width="7" height="4" viewBox="0 0 7 4"><path d="M0 0 H7 L3.5 3.5 Z" fill="#555"/></svg>
</body></html>
